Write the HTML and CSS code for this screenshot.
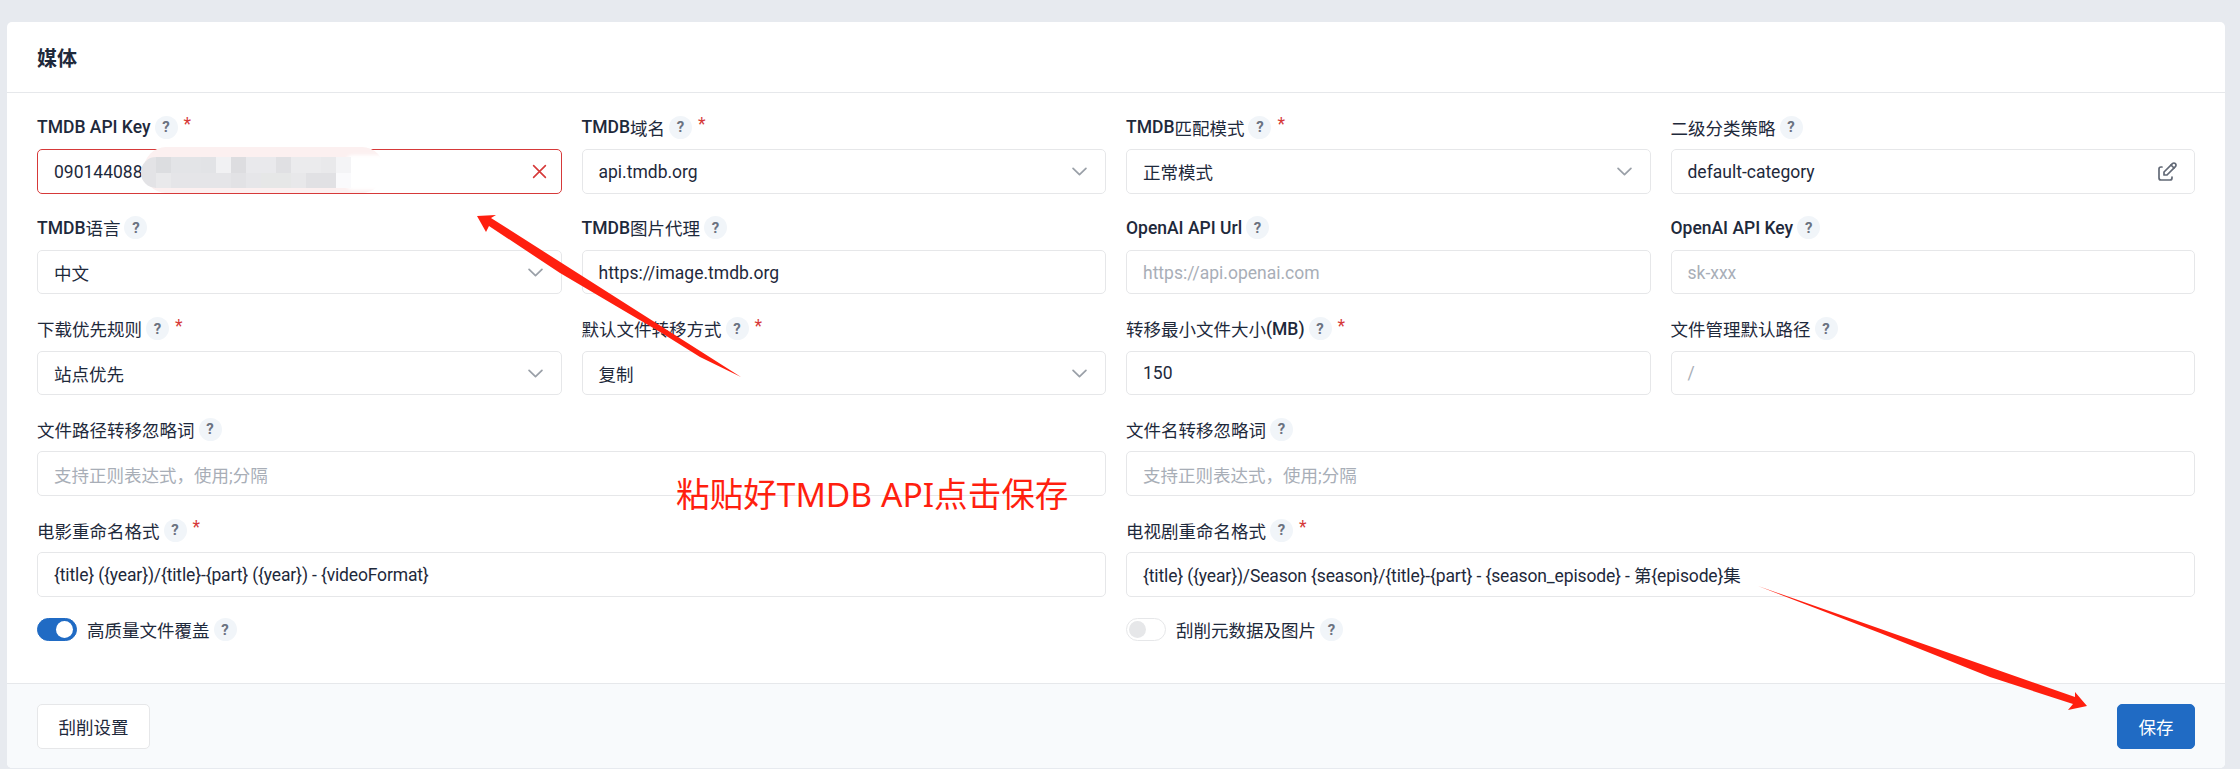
FILE: index.html
```html
<!DOCTYPE html>
<html lang="zh-CN">
<head>
<meta charset="utf-8">
<title>媒体</title>
<link rel="stylesheet" href="styles.css">
</head>
<body>
<section class="card">
  <header class="card-header"><h3 class="card-title">媒体</h3></header>
  <div class="card-body">
    <div class="grid">
      <div class="field">
        <label class="label"><span class="lat">TMDB API Key</span><span class="help">?</span><span class="req">*</span></label>
        <div class="input invalid"><span class="val">0901440880</span>
          <svg class="ico x" viewBox="0 0 14 14"><path d="M1.5 1.5l11 11M12.5 1.5l-11 11"/></svg>
        </div>
      </div>
      <div class="field">
        <label class="label"><span class="lat">TMDB</span>域名<span class="help">?</span><span class="req">*</span></label>
        <div class="input"><span class="val">api.tmdb.org</span>
          <svg class="ico chev" viewBox="0 0 14 8"><path d="M1 1l6 6 6-6"/></svg>
        </div>
      </div>
      <div class="field">
        <label class="label"><span class="lat">TMDB</span>匹配模式<span class="help">?</span><span class="req">*</span></label>
        <div class="input"><span class="val">正常模式</span>
          <svg class="ico chev" viewBox="0 0 14 8"><path d="M1 1l6 6 6-6"/></svg>
        </div>
      </div>
      <div class="field">
        <label class="label">二级分类策略<span class="help">?</span></label>
        <div class="input"><span class="val">default-category</span>
          <svg class="ico edit" viewBox="0 0 24 24"><path d="M7 7h-1a2 2 0 0 0 -2 2v9a2 2 0 0 0 2 2h9a2 2 0 0 0 2 -2v-1"/><path d="M20.385 6.585a2.1 2.1 0 0 0 -2.97 -2.97l-8.415 8.385v3h3l8.385 -8.415z"/><path d="M16 5l3 3"/></svg>
        </div>
      </div>

      <div class="field">
        <label class="label"><span class="lat">TMDB</span>语言<span class="help">?</span></label>
        <div class="input"><span class="val">中文</span>
          <svg class="ico chev" viewBox="0 0 14 8"><path d="M1 1l6 6 6-6"/></svg>
        </div>
      </div>
      <div class="field">
        <label class="label"><span class="lat">TMDB</span>图片代理<span class="help">?</span></label>
        <div class="input"><span class="val">https://image.tmdb.org</span></div>
      </div>
      <div class="field">
        <label class="label"><span class="lat">OpenAI API Url</span><span class="help">?</span></label>
        <div class="input"><span class="ph">https://api.openai.com</span></div>
      </div>
      <div class="field">
        <label class="label"><span class="lat">OpenAI API Key</span><span class="help">?</span></label>
        <div class="input"><span class="ph">sk-xxx</span></div>
      </div>

      <div class="field">
        <label class="label">下载优先规则<span class="help">?</span><span class="req">*</span></label>
        <div class="input"><span class="val">站点优先</span>
          <svg class="ico chev" viewBox="0 0 14 8"><path d="M1 1l6 6 6-6"/></svg>
        </div>
      </div>
      <div class="field">
        <label class="label">默认文件转移方式<span class="help">?</span><span class="req">*</span></label>
        <div class="input"><span class="val">复制</span>
          <svg class="ico chev" viewBox="0 0 14 8"><path d="M1 1l6 6 6-6"/></svg>
        </div>
      </div>
      <div class="field">
        <label class="label">转移最小文件大小<span class="lat">(MB)</span><span class="help">?</span><span class="req">*</span></label>
        <div class="input"><span class="val">150</span></div>
      </div>
      <div class="field">
        <label class="label">文件管理默认路径<span class="help">?</span></label>
        <div class="input"><span class="ph">/</span></div>
      </div>

      <div class="field wide">
        <label class="label">文件路径转移忽略词<span class="help">?</span></label>
        <div class="input"><span class="ph">支持正则表达式，使用;分隔</span></div>
      </div>
      <div class="field wide">
        <label class="label">文件名转移忽略词<span class="help">?</span></label>
        <div class="input"><span class="ph">支持正则表达式，使用;分隔</span></div>
      </div>

      <div class="field wide">
        <label class="label">电影重命名格式<span class="help">?</span><span class="req">*</span></label>
        <div class="input"><span class="val fmt">{title} ({year})/{title}-{part} ({year}) - {videoFormat}</span></div>
      </div>
      <div class="field wide">
        <label class="label">电视剧重命名格式<span class="help">?</span><span class="req">*</span></label>
        <div class="input"><span class="val fmt">{title} ({year})/Season {season}/{title}-{part} - {season_episode} - 第{episode}集</span></div>
      </div>

      <div class="switch-row wide">
        <span class="toggle on"></span><span class="switch-text">高质量文件覆盖</span><span class="help">?</span>
      </div>
      <div class="switch-row wide">
        <span class="toggle"></span><span class="switch-text">刮削元数据及图片</span><span class="help">?</span>
      </div>
    </div>
  </div>
  <footer class="card-footer">
    <button class="btn">刮削设置</button>
    <button class="btn primary">保存</button>
  </footer>
</section>

<svg class="marks" viewBox="0 0 2240 769" aria-hidden="true">
  <defs><filter id="soft" x="-10%" y="-30%" width="120%" height="160%"><feGaussianBlur stdDeviation="1.5"/></filter></defs>
  <rect x="144" y="147" width="240" height="46" rx="22" fill="#fcf0f0"/>
  <rect x="345" y="155" width="42" height="35" rx="8" fill="#fff" filter="url(#soft)"/>
  <rect x="141" y="157" width="210" height="31" rx="15" fill="#e3e3e6"/>
  <g>
    <rect x="156" y="157" width="15" height="16" fill="#dcdde0"/>
    <rect x="171" y="157" width="30" height="16" fill="#e3e4e7"/>
    <rect x="201" y="157" width="15" height="16" fill="#e2e3e6"/>
    <rect x="216" y="157" width="15" height="16" fill="#f1f1f3"/>
    <rect x="231" y="157" width="15" height="16" fill="#dddde0"/>
    <rect x="246" y="157" width="30" height="16" fill="#e9e9ec"/>
    <rect x="276" y="157" width="15" height="16" fill="#e0e0e3"/>
    <rect x="291" y="157" width="30" height="16" fill="#ebebed"/>
    <rect x="321" y="157" width="15" height="16" fill="#e9e9eb"/>
    <rect x="336" y="157" width="15" height="16" fill="#f4f4f6"/>
    <rect x="156" y="173" width="15" height="15" fill="#e9e9eb"/>
    <rect x="171" y="173" width="60" height="15" fill="#e5e5e8"/>
    <rect x="231" y="173" width="15" height="15" fill="#e2e2e5"/>
    <rect x="246" y="173" width="15" height="15" fill="#e6e6e9"/>
    <rect x="261" y="173" width="30" height="15" fill="#e6e7e7"/>
    <rect x="291" y="173" width="15" height="15" fill="#e8e8ea"/>
    <rect x="306" y="173" width="30" height="15" fill="#e1e1e4"/>
    <rect x="336" y="173" width="15" height="15" fill="#fafafc"/>
  </g>
  <polygon class="arrow" points="741,377 491,218 496,215 477,216 486,232 489,226 560,273 660,332 700,357"/>
  <polygon class="arrow" points="1758,586 2075,697 2075,692 2087,706 2068,710 2073,704 1990,677 1880,633"/>
</svg>
<div class="note">粘贴好TMDB API点击保存</div>
</body>
</html>
```
FILE: styles.css
```css
* { box-sizing: border-box; }
html, body { margin: 0; height: 769px; overflow: hidden; }
body {
  background: #e7eaef;
  padding: 22px 15px 1px 7px;
  font-family: Roboto, "Noto Sans CJK SC", sans-serif;
  font-size: 17.5px;
  color: #1e293b;
  position: relative;
}
.card {
  height: 746px;
  background: #fff;
  border-radius: 5px;
  display: flex;
  flex-direction: column;
  overflow: hidden;
}
.card-header {
  height: 71px;
  border-bottom: 1px solid #e6e8eb;
  padding: 0 30px;
  display: flex;
  align-items: center;
}
.card-title { margin: 0; font-size: 20px; font-weight: 700; color: #1e293b; }
.card-body { flex: 1; padding: 21px 30px 0 30px; }
.grid {
  display: grid;
  grid-template-columns: repeat(4, minmax(0, 1fr));
  column-gap: 20px;
  row-gap: 21.25px;
}
.wide { grid-column: span 2; }
.label {
  display: flex;
  align-items: center;
  height: 26px;
  margin-bottom: 9px;
  font-weight: 400;
  font-size: 17.5px;
  white-space: nowrap;
}
.lat { font-weight: 500; }
.help {
  width: 23px;
  height: 23px;
  margin-left: 4px;
  border-radius: 50%;
  background: #f1f5f9;
  color: #6b7280;
  font-size: 15px;
  font-weight: 700;
  display: inline-flex;
  align-items: center;
  justify-content: center;
  flex: none;
}
.req { color: #d63939; margin-left: 6px; font-size: 17.5px; line-height: 1; position: relative; top: -2px; }
.input {
  height: 44.5px;
  padding: 1px 16px 0;
  border: 1.25px solid #e6e7e9;
  border-radius: 5px;
  background: #fff;
  display: flex;
  align-items: center;
  justify-content: space-between;
  font-size: 17.5px;
  white-space: nowrap;
}
.input.invalid { border-color: #d63939; }
.fmt { letter-spacing: -0.15px; }
.ph { color: #a8aeb7; }
.ico { flex: none; fill: none; stroke-linecap: round; stroke-linejoin: round; }
.chev { width: 15px; height: 9px; stroke: #9aa0a8; stroke-width: 1.6; margin-right: 2px; }
.x { width: 15px; height: 15px; stroke: #d63939; stroke-width: 1.5; margin-right: -2px; }
.edit { width: 24px; height: 24px; stroke: #626976; stroke-width: 1.7; margin-right: -1px; }
.switch-row { display: flex; align-items: center; height: 26px; margin-top: -1px; }
.toggle {
  width: 40px;
  height: 23px;
  border-radius: 12px;
  background: #fff;
  border: 1.25px solid #e6e7e9;
  display: flex;
  align-items: center;
  padding: 0 2px;
  flex: none;
}
.toggle::before { content: ""; width: 17px; height: 17px; border-radius: 50%; background: #e6e7e9; }
.toggle.on { background: #206bc4; border-color: #206bc4; justify-content: flex-end; padding: 0 3px; }
.toggle.on::before { background: #fff; }
.switch-text { margin-left: 10px; }
.card-footer {
  height: 85px;
  padding: 20px 30px 0;
  background: #f8fafc;
  border-top: 1px solid #e6e8eb;
  display: flex;
  justify-content: space-between;
  align-items: flex-start;
}
.btn {
  height: 45px;
  padding: 0 20.5px;
  border: 1.25px solid #e6e7e9;
  border-radius: 5px;
  background: #fff;
  color: #1e293b;
  font: 400 17.5px Roboto, "Noto Sans CJK SC", sans-serif;
}
.btn.primary { width: 78px; padding: 0; background: #206bc4; border-color: #206bc4; color: #fff; }
.marks { position: absolute; left: 0; top: 0; width: 2240px; height: 769px; pointer-events: none; }
.arrow { fill: #ff1f0f; }
.note {
  position: absolute;
  left: 676px;
  top: 471px;
  color: #ff1f0f;
  font-family: "Noto Sans", "Noto Sans CJK SC", sans-serif;
  font-size: 33.6px;
  line-height: 46px;
  white-space: nowrap;
}
```
